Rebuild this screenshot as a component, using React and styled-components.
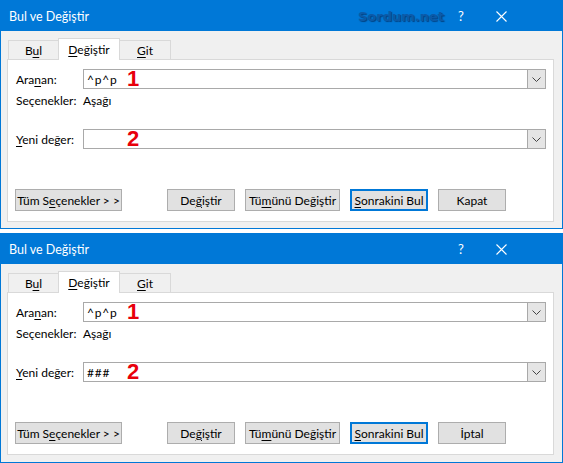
import React from "react";
import styled, { createGlobalStyle } from "styled-components";

const GlobalStyle = createGlobalStyle`
  html, body { margin: 0; padding: 0; background: #fff; }
  body {
    font-family: Lato, "Noto Sans", sans-serif;
    font-size: 12px;
    color: #000;
  }
`;

const Page = styled.div`
  width: 563px;
  display: flex;
  flex-direction: column;
  gap: 4px;
`;

const Window = styled.div`
  box-sizing: border-box;
  height: ${(p) => p.$h}px;
  border: 1px solid #0078d7;
  background: #f0f0f0;
  display: flex;
  flex-direction: column;
`;

const TitleBar = styled.div`
  height: 30px;
  flex: none;
  background: #0078d7;
  color: #fff;
  display: flex;
  align-items: center;
  padding-left: 8px;
`;

const Title = styled.div`
  flex: 1;
  font-size: 12.5px;
`;

const Watermark = styled.div`
  font-family: "DejaVu Sans", sans-serif;
  font-weight: bold;
  font-size: 13px;
  color: #0c5aa8;
  text-shadow: 1px 1px 1px rgba(0, 45, 100, 0.7);
  margin-right: -1px;
`;

const HelpBtn = styled.div`
  width: 20px;
  text-align: center;
  font-size: 13px;
  margin-left: 8px;
`;

const CloseBtn = styled.div`
  width: 60px;
  margin-right: 31px;
  display: flex;
  justify-content: center;
`;

const Body = styled.div`
  flex: 1;
  padding: 7px 8px 0 6px;
  display: flex;
  flex-direction: column;
`;

const TabStrip = styled.div`
  height: 21px;
  display: flex;
  align-items: flex-end;
  padding-left: 2px;
  position: relative;
  z-index: 1;
`;

const Tab = styled.div`
  box-sizing: border-box;
  width: ${(p) => p.$w}px;
  height: ${(p) => (p.$active ? 22 : 19)}px;
  margin-bottom: ${(p) => (p.$active ? -1 : 0)}px;
  margin-left: -1px;
  border: 1px solid #d9d9d9;
  border-bottom: none;
  background: ${(p) => (p.$active ? "#fff" : "#f0f0f0")};
  display: flex;
  align-items: center;
  justify-content: center;
  padding-top: ${(p) => (p.$active ? 0 : 1)}px;
  white-space: nowrap;
  position: relative;
  z-index: ${(p) => (p.$active ? 2 : 1)};
`;

const Panel = styled.div`
  box-sizing: border-box;
  height: 163px;
  background: #fff;
  border: 1px solid #d9d9d9;
  padding: 9px 7px 0 8px;
  display: flex;
  flex-direction: column;
`;

const Field = styled.div`
  display: flex;
  align-items: center;
  height: ${(p) => p.$h || 20}px;
  margin-top: ${(p) => p.$mt || 0}px;
`;

const Label = styled.div`
  width: 67px;
  flex: none;
  white-space: nowrap;
`;

const Combo = styled.div`
  position: relative;
  box-sizing: border-box;
  flex: 1;
  height: 20px;
  border: 1px solid #a9a9a9;
  background: #fff;
  display: flex;
  align-items: center;
  padding-left: 3px;
`;

const ComboText = styled.span`
  flex: 1;
  letter-spacing: 0.8px;
`;

const DropBtn = styled.div`
  width: 17px;
  height: 100%;
  background: #e5e5e5;
  border-left: 1px solid #a9a9a9;
  display: flex;
  align-items: center;
  justify-content: center;
`;

const Marker = styled.span`
  position: absolute;
  left: 43px;
  top: -2px;
  font-family: "Liberation Sans", Arial, sans-serif;
  font-weight: bold;
  font-size: 22px;
  line-height: 1;
  color: #e8000b;
`;

const ButtonRow = styled.div`
  display: flex;
  margin-top: 40px;
  margin-left: -1px;
  gap: 10px;
`;

const Button = styled.div`
  box-sizing: border-box;
  width: ${(p) => p.$w}px;
  height: 22px;
  margin-right: ${(p) => p.$gap || 0}px;
  background: #e1e1e1;
  border: ${(p) => (p.$default ? "2px solid #0078d7" : "1px solid #adadad")};
  display: flex;
  align-items: center;
  justify-content: center;
  white-space: nowrap;
`;

const Key = styled.span`
  text-decoration: underline;
  text-underline-offset: 2px;
`;

const CloseIcon = () => (
  <svg width="11" height="11" viewBox="0 0 11 11">
    <path d="M0.5 0.5 L10.5 10.5 M10.5 0.5 L0.5 10.5" stroke="#fff" strokeWidth="1.1" />
  </svg>
);

const Chevron = () => (
  <svg width="9" height="5" viewBox="0 0 9 5">
    <path d="M0.5 0.5 L4.5 4.5 L8.5 0.5" stroke="#444" strokeWidth="1" fill="none" />
  </svg>
);

const Dialog = ({ height, watermark, replaceValue, closeLabel }) => (
  <Window $h={height}>
    <TitleBar>
      <Title>Bul ve Değiştir</Title>
      {watermark && <Watermark>Sordum.net</Watermark>}
      <HelpBtn>?</HelpBtn>
      <CloseBtn>
        <CloseIcon />
      </CloseBtn>
    </TitleBar>
    <Body>
      <TabStrip>
        <Tab $w={51}>
          <span>B<Key>u</Key>l</span>
        </Tab>
        <Tab $w={62} $active>
          <span><Key>D</Key>eğiştir</span>
        </Tab>
        <Tab $w={52}>
          <span><Key>G</Key>it</span>
        </Tab>
      </TabStrip>
      <Panel>
        <Field>
          <Label>
            Ara<Key>n</Key>an:
          </Label>
          <Combo>
            <ComboText>^p^p</ComboText>
            <Marker>1</Marker>
            <DropBtn>
              <Chevron />
            </DropBtn>
          </Combo>
        </Field>
        <Field $h={16} $mt={3}>
          <Label>Seçenekler:</Label>
          <span>Aşağı</span>
        </Field>
        <Field $mt={21}>
          <Label>
            <Key>Y</Key>eni değer:
          </Label>
          <Combo>
            <ComboText>{replaceValue}</ComboText>
            <Marker>2</Marker>
            <DropBtn>
              <Chevron />
            </DropBtn>
          </Combo>
        </Field>
        <ButtonRow>
          <Button $w={107} $gap={35}>
            <span>Tüm S<Key>e</Key>çenekler &gt; &gt;</span>
          </Button>
          <Button $w={68}>
            <span>De<Key>ğ</Key>iştir</span>
          </Button>
          <Button $w={95}>
            <span>Tü<Key>m</Key>ünü Değiştir</span>
          </Button>
          <Button $w={78} $default>
            <span><Key>S</Key>onrakini Bul</span>
          </Button>
          <Button $w={68}>
            <span>{closeLabel}</span>
          </Button>
        </ButtonRow>
      </Panel>
    </Body>
  </Window>
);

export default function App() {
  return (
    <>
      <GlobalStyle />
      <Page>
        <Dialog height={229} watermark replaceValue="" closeLabel="Kapat" />
        <Dialog height={230} replaceValue="###" closeLabel="İptal" />
      </Page>
    </>
  );
}
